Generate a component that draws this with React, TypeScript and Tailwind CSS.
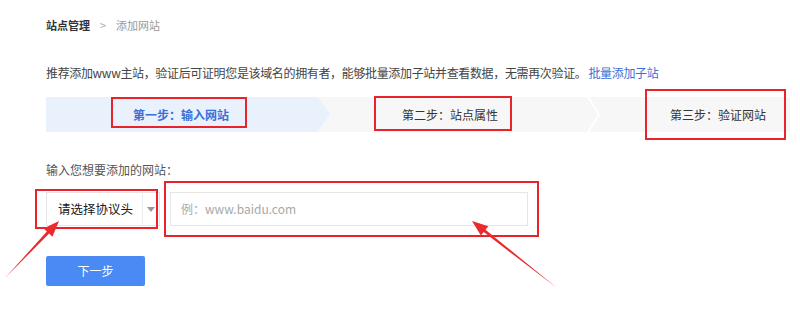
import React from "react";

const font = "font-['Microsoft_YaHei','Noto_Sans_CJK_SC',sans-serif]";

function RedBox({ className }: { className: string }) {
  return <div className={`absolute border-2 border-[#e8232a] ${className}`} />;
}

function Arrows() {
  return (
    <svg className="pointer-events-none absolute inset-0" width="800" height="314" viewBox="0 0 800 314">
      <polygon
        fill="#ea2a2e"
        points="5,278 46.9,231.6 43.6,228.5 59,221 52.4,236.7 49.1,233.6"
      />
      <polygon
        fill="#ea2a2e"
        points="557,288 485.5,229.7 488.3,226.2 472,221 480.9,235.6 483.7,232.1"
      />
    </svg>
  );
}

export default function App() {
  return (
    <div className={`relative h-[314px] w-[800px] overflow-hidden bg-white pl-[46px] ${font}`}>
      {/* Breadcrumb */}
      <div className="mt-[17px] flex h-[16px] items-center text-[11px] leading-[16px]">
        <span className="font-semibold text-[#333]">站点管理</span>
        <span className="mx-[10px] text-[#aaa]">&gt;</span>
        <span className="text-[#999]">添加网站</span>
      </div>

      {/* Intro */}
      <p className="mt-[32px] text-[12px] leading-[16px] tracking-[-0.35px] text-[#444]">
        推荐添加www主站，验证后可证明您是该域名的拥有者，能够批量添加子站并查看数据，无需再次验证。
        <span className="ml-0.5 text-[#3b6fd8]">批量添加子站</span>
      </p>

      {/* Steps */}
      <div className="mt-[16px] flex h-[35px] w-[744px] bg-[#f7f7f7] text-[12px]">
        <div className="relative flex w-[272px] flex-none items-center bg-[#e9f1fd] pl-[87px] font-semibold text-[#3a6fd6]">
          第一步：输入网站
          <div className="absolute left-full top-0 h-0 w-0 border-y-[17.5px] border-l-[12px] border-y-transparent border-l-[#e9f1fd]" />
        </div>
        <div className="relative flex w-[277px] flex-none items-center pl-[84px] text-[#333]">
          第二步：站点属性
          <svg className="absolute right-[-6px] top-0" width="14" height="35" viewBox="0 0 14 35">
            <polyline points="1,0 12,17.5 1,35" fill="none" stroke="#ffffff" strokeWidth="2" />
          </svg>
        </div>
        <div className="flex flex-1 items-center pl-[75px] text-[#333]">第三步：验证网站</div>
      </div>

      {/* Label */}
      <div className="mt-[30px] text-[12px] leading-[16px] text-[#555]">输入您想要添加的网站：</div>

      {/* Inputs */}
      <div className="mt-[14px] flex h-[34px] gap-[10px]">
        <div className="flex w-[114px] items-center border border-[#e6e6e6] bg-white">
          <span className="flex-1 pl-[11px] text-[12.5px] text-[#1a1a1a]">请选择协议头</span>
          <div className="flex h-full w-[17px] items-center justify-center border-l border-[#ececec]">
            <svg width="8" height="5" viewBox="0 0 8 5">
              <polygon points="0,0 8,0 4,5" fill="#999" />
            </svg>
          </div>
        </div>
        <div className="flex w-[358px] items-center border border-[#e6e6e6] bg-white pl-[10px] text-[12px] text-[#a8a8a8]">
          例：www.baidu.com
        </div>
      </div>

      {/* Button */}
      <button className="mt-[30px] flex h-[30px] w-[99px] items-center justify-center rounded-[2px] bg-[#4a8af4] text-[12px] text-white">
        下一步
      </button>

      {/* Annotations */}
      <RedBox className="left-[111px] top-[97px] h-[31px] w-[136px]" />
      <RedBox className="left-[374px] top-[96px] h-[35px] w-[138px]" />
      <RedBox className="left-[645px] top-[89px] h-[51px] w-[141px]" />
      <RedBox className="left-[35px] top-[189px] h-[40px] w-[123px]" />
      <RedBox className="left-[164px] top-[181px] h-[56px] w-[375px]" />
      <Arrows />
    </div>
  );
}
